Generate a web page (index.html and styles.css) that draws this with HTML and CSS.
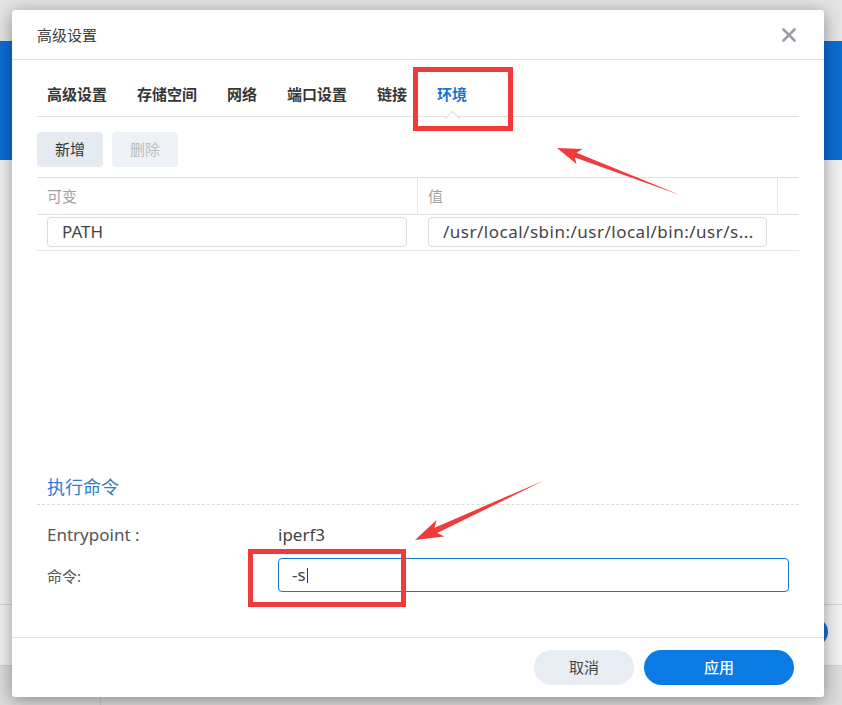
FILE: index.html
```html
<!DOCTYPE html>
<html lang="zh-CN">
<head>
<meta charset="utf-8">
<title>高级设置</title>
<link rel="stylesheet" href="styles.css">
</head>
<body>
<div class="backdrop">
  <div class="bg-top"></div>
  <div class="bg-band"></div>
  <div class="bg-mid"></div>
  <div class="bg-row"><span class="bg-pill"></span></div>
  <div class="bg-bottom"><span class="bg-vline"></span></div>
</div>

<div class="dialog">
  <div class="dlg-header">
    <span class="dlg-title">高级设置</span>
    <svg class="close" width="14" height="14" viewBox="0 0 14 14"><path d="M1.5 1.5 L12.5 12.5 M12.5 1.5 L1.5 12.5" stroke="#9a9ea4" stroke-width="2.6" stroke-linecap="round"/></svg>
  </div>
  <div class="dlg-body">
    <div class="tabs">
      <span class="tab">高级设置</span>
      <span class="tab">存储空间</span>
      <span class="tab">网络</span>
      <span class="tab">端口设置</span>
      <span class="tab">链接</span>
      <span class="tab active">环境</span>
    </div>
    <div class="toolbar">
      <span class="btn">新增</span>
      <span class="btn disabled">删除</span>
    </div>
    <div class="grid">
      <div class="th">可变</div>
      <div class="th">值</div>
      <div class="th last"></div>
      <div class="td"><div class="field lat">PATH</div></div>
      <div class="td"><div class="field lat value-field">/usr/local/sbin:/usr/local/bin:/usr/s...</div></div>
      <div class="td"></div>
    </div>
    <div class="spacer"></div>
    <div class="section">
      <div class="section-title">执行命令</div>
      <div class="form-row">
        <span class="label lat">Entrypoint :</span>
        <span class="value lat">iperf3</span>
      </div>
      <div class="form-row">
        <span class="label">命令:</span>
        <div class="field cmd lat">-s<span class="caret"></span></div>
      </div>
    </div>
  </div>
  <div class="dlg-footer">
    <span class="pill cancel">取消</span>
    <span class="pill apply">应用</span>
  </div>
</div>

<div class="mark mark1"></div>
<div class="mark mark2"></div>
<svg class="arrows" width="842" height="705" viewBox="0 0 842 705">
  <polygon fill="#ef3b3b" points="557,148 582.3,149.1 576.6,152.8 680,195 574.8,157.4 576.5,164.1"/>
  <polygon fill="#ef3b3b" points="415,540 444.2,536.5 437.2,533.1 545,480 434.6,527.7 436.6,520.1"/>
</svg>
</body>
</html>
```

FILE: styles.css
```css
* { box-sizing: border-box; }
html, body { margin: 0; padding: 0; }
body {
  width: 842px;
  height: 705px;
  overflow: hidden;
  position: relative;
  font-family: "Noto Sans", "Noto Sans CJK SC", sans-serif;
  font-size: 15px;
  color: #3a3a3a;
  background: #efefef;
}

/* page behind the modal */
.backdrop { display: flex; flex-direction: column; height: 705px; }
.bg-top { height: 41px; background: #e4e4e4; }
.bg-band { height: 119px; background: #0a6dd3; }
.bg-mid { height: 445px; background: #f1f1f1; border-bottom: 1px solid #d6d6d6; }
.bg-row {
  height: 61px;
  background: #f1f1f1;
  border-bottom: 1px solid #d2d2d2;
  display: flex;
  justify-content: flex-end;
  align-items: center;
  padding-right: 14px;
}
.bg-pill { width: 120px; height: 28px; border-radius: 14px; background: #1a6fc4; margin-top: -6px; }
.bg-bottom { flex: 1; background: #dcdcdc; position: relative; }
.bg-vline { position: absolute; left: 100px; top: 28px; bottom: 0; border-left: 1px solid #c8c8c8; }

/* modal */
.dialog {
  position: absolute;
  left: 12px;
  top: 10px;
  width: 812px;
  height: 687px;
  background: #fff;
  border-radius: 3px;
  box-shadow: 0 3px 18px rgba(0,0,0,0.38);
  display: flex;
  flex-direction: column;
}
.dlg-header {
  height: 50px;
  padding: 15px 28px 0 25px;
  border-bottom: 1px solid #e3e3e3;
  display: flex;
  justify-content: space-between;
  align-items: flex-start;
}
.dlg-title { line-height: 20px; font-size: 15px; color: #3c3c3c; }
.close { margin-top: 3px; }

.dlg-body {
  flex: 1;
  padding: 0 25px;
  display: flex;
  flex-direction: column;
}
.tabs {
  height: 57px;
  padding: 24px 0 0 10px;
  border-bottom: 1px solid #e2e2e2;
  display: flex;
  gap: 30px;
  position: relative;
}
.tab { line-height: 20px; font-size: 15px; font-weight: 700; color: #363636; position: relative; }
.tab.active { color: #1a74d2; }
.tab.active::after {
  content: "";
  position: absolute;
  left: 50%;
  top: 29px;
  width: 10px;
  height: 10px;
  margin-left: -5px;
  background: #fff;
  border-left: 1px solid #dcdcdc;
  border-top: 1px solid #dcdcdc;
  transform: rotate(45deg);
}

.toolbar { display: flex; gap: 9px; margin-top: 15px; }
.btn {
  width: 66px;
  height: 35px;
  line-height: 35px;
  text-align: center;
  border-radius: 4px;
  background: #e6ebf1;
  color: #333;
}
.btn.disabled { background: #eef1f5; color: #b9bdc3; }

.grid {
  margin-top: 10px;
  display: grid;
  grid-template-columns: 381px 360px 1fr;
  border-top: 1px solid #e0e0e0;
}
.th {
  height: 37px;
  line-height: 36px;
  padding-left: 10px;
  color: #a2a2a2;
  border-right: 1px solid #e8e8e8;
  border-bottom: 1px solid #e0e0e0;
}
.th.last { border-right: none; }
.td {
  height: 36px;
  padding: 2px 11px 0 10px;
  border-bottom: 1px solid #e6e6e6;
}
.field {
  height: 30px;
  line-height: 28px;
  border: 1px solid #d9dde3;
  border-radius: 4px;
  padding: 0 14px;
  color: #444;
  white-space: nowrap;
}
.value-field { padding-right: 4px; letter-spacing: 0.5px; }

/* Latin text renders larger than the CJK text in this UI */
.lat { font-size: 17px; }

.spacer { flex: 1; }

.section { padding-bottom: 45px; }
.section-title {
  font-size: 18px;
  line-height: 24px;
  color: #2a7cd0;
  padding: 0 0 5px 10px;
  border-bottom: 1px dashed #dadada;
  margin-bottom: 12px;
}
.form-row { display: flex; align-items: center; min-height: 34px; margin-bottom: 7px; padding-left: 10px; padding-right: 10px; }
.form-row:last-child { margin-bottom: 0; }
.label { width: 231px; color: #555; flex: none; }
.value { color: #444; }
.field.cmd {
  flex: 1;
  height: 34px;
  line-height: 32px;
  border-color: #1a74d2;
  padding-left: 13px;
  display: flex;
  align-items: center;
}
.caret { display: inline-block; width: 1px; height: 15px; background: #333; margin-left: 1px; }

.dlg-footer {
  height: 60px;
  border-top: 1px solid #e3e3e3;
  padding: 12px 30px 0 0;
  display: flex;
  justify-content: flex-end;
  gap: 10px;
}
.pill {
  height: 35px;
  line-height: 35px;
  border-radius: 18px;
  text-align: center;
}
.cancel { width: 100px; background: #e8edf3; color: #444; }
.apply { width: 150px; background: #0a7be5; color: #fff; font-weight: 500; }

/* red annotations over the screenshot */
.mark { position: absolute; border: 5px solid #ef3b3b; }
.mark1 { left: 413px; top: 67px; width: 100px; height: 64px; }
.mark2 { left: 248px; top: 549px; width: 158px; height: 58px; }
.arrows { position: absolute; left: 0; top: 0; }
```
